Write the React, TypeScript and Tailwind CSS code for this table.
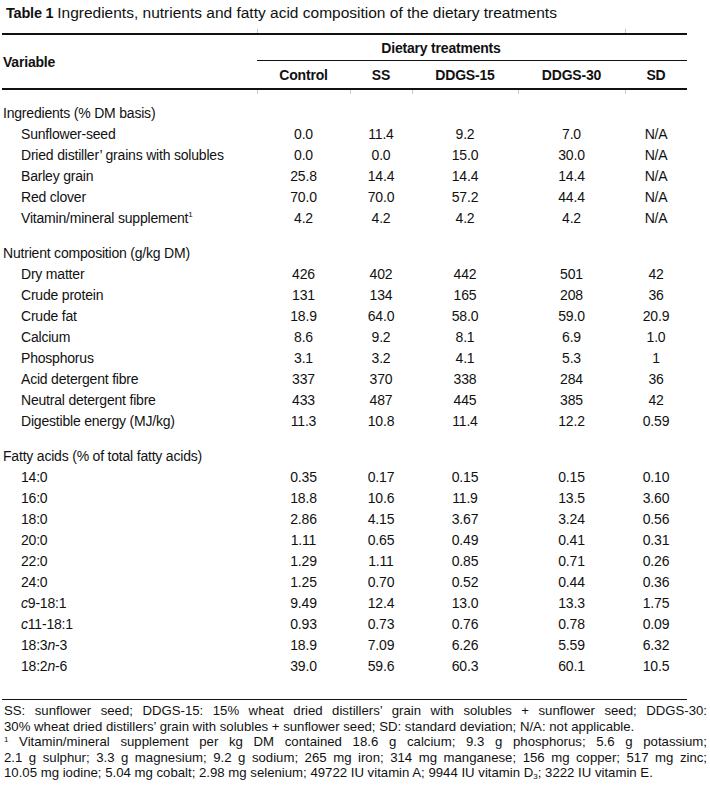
import type { ReactNode } from "react";

type Row = [ReactNode, string, string, string, string, string];

interface Section {
  title: string;
  rows: Row[];
}

// column widths taken from the rule ticks in the reference
const GRID = "grid grid-cols-[255px_93px_62px_106px_107px_62px]";

const sections: Section[] = [
  {
    title: "Ingredients (% DM basis)",
    rows: [
      ["Sunflower-seed", "0.0", "11.4", "9.2", "7.0", "N/A"],
      ["Dried distiller’ grains with solubles", "0.0", "0.0", "15.0", "30.0", "N/A"],
      ["Barley grain", "25.8", "14.4", "14.4", "14.4", "N/A"],
      ["Red clover", "70.0", "70.0", "57.2", "44.4", "N/A"],
      [
        <>
          Vitamin/mineral supplement<sup className="text-[8px] relative -top-[6px]">1</sup>
        </>,
        "4.2",
        "4.2",
        "4.2",
        "4.2",
        "N/A",
      ],
    ],
  },
  {
    title: "Nutrient composition (g/kg DM)",
    rows: [
      ["Dry matter", "426", "402", "442", "501", "42"],
      ["Crude protein", "131", "134", "165", "208", "36"],
      ["Crude fat", "18.9", "64.0", "58.0", "59.0", "20.9"],
      ["Calcium", "8.6", "9.2", "8.1", "6.9", "1.0"],
      ["Phosphorus", "3.1", "3.2", "4.1", "5.3", "1"],
      ["Acid detergent fibre", "337", "370", "338", "284", "36"],
      ["Neutral detergent fibre", "433", "487", "445", "385", "42"],
      ["Digestible energy (MJ/kg)", "11.3", "10.8", "11.4", "12.2", "0.59"],
    ],
  },
  {
    title: "Fatty acids (% of total fatty acids)",
    rows: [
      ["14:0", "0.35", "0.17", "0.15", "0.15", "0.10"],
      ["16:0", "18.8", "10.6", "11.9", "13.5", "3.60"],
      ["18:0", "2.86", "4.15", "3.67", "3.24", "0.56"],
      ["20:0", "1.11", "0.65", "0.49", "0.41", "0.31"],
      ["22:0", "1.29", "1.11", "0.85", "0.71", "0.26"],
      ["24:0", "1.25", "0.70", "0.52", "0.44", "0.36"],
      [<><i>c</i>9-18:1</>, "9.49", "12.4", "13.0", "13.3", "1.75"],
      [<><i>c</i>11-18:1</>, "0.93", "0.73", "0.76", "0.78", "0.09"],
      [<>18:3<i>n</i>-3</>, "18.9", "7.09", "6.26", "5.59", "6.32"],
      [<>18:2<i>n</i>-6</>, "39.0", "59.6", "60.3", "60.1", "10.5"],
    ],
  },
];

function TableRow({ row }: { row: Row }) {
  const [label, ...vals] = row;
  return (
    <div className={`${GRID} h-[21px] items-center`}>
      <div className="pl-[19px] whitespace-nowrap">{label}</div>
      {vals.map((v, i) => (
        <div key={i} className="text-center">
          {v}
        </div>
      ))}
    </div>
  );
}

export default function App() {
  return (
    <div className="w-[710px] min-h-[793px] bg-white text-[#111] font-['Liberation_Sans',Arial,sans-serif] text-[14px] tracking-[-0.2px] leading-[16px]">
      <div className="pl-[6px] pt-[5px] whitespace-nowrap">
        <span className="font-bold text-[14.5px]">Table 1</span>{" "}
        <span className="text-[15.5px] tracking-normal">
          Ingredients, nutrients and fatty acid composition of the dietary treatments
        </span>
      </div>

      <div className="ml-[2px] w-[685px]">
        {/* little cell ticks above the top rule */}
        <div className={`${GRID} h-[4px] mt-[8px]`}>
          <div />
          <div className="border-l border-[#c8c8c8]" />
          <div />
          <div />
          <div />
          <div className="border-l border-[#c8c8c8]" />
        </div>

        <div className={`${GRID} grid-rows-[26px_27px] border-t-2 border-b-2 border-[#111] font-bold`}>
          <div className="row-span-2 flex items-center pl-[1px]">Variable</div>
          <div className="col-span-5 flex items-center justify-center pr-[62px] border-b-[1.5px] border-[#111]">
            Dietary treatments
          </div>
          <div className="flex items-center justify-center">Control</div>
          <div className="flex items-center justify-center">SS</div>
          <div className="flex items-center justify-center">DDGS-15</div>
          <div className="flex items-center justify-center">DDGS-30</div>
          <div className="flex items-center justify-center">SD</div>
        </div>

        <div className={`${GRID} h-[4px]`}>
          <div />
          <div className="border-l border-[#c8c8c8]" />
          <div className="border-l border-[#c8c8c8]" />
          <div className="border-l border-[#c8c8c8]" />
          <div className="border-l border-[#c8c8c8]" />
          <div className="border-l border-[#c8c8c8]" />
        </div>

        <div className="flex flex-col gap-[14px] pt-[8px] pb-[23px] border-b-[1.5px] border-[#111]">
          {sections.map((s) => (
            <div key={s.title}>
              <div className="h-[21px] flex items-center pl-[1px]">{s.title}</div>
              {s.rows.map((r, i) => (
                <TableRow key={i} row={r} />
              ))}
            </div>
          ))}
        </div>
      </div>

      <div className="mt-[3px] ml-[4px] w-[703px] text-[13.2px] leading-[15.6px] tracking-normal">
        <div className="text-justify [text-align-last:justify] whitespace-nowrap">
          SS: sunflower seed; DDGS-15: 15% wheat dried distillers’ grain with solubles + sunflower seed; DDGS-30:
        </div>
        <div className="whitespace-nowrap">
          30% wheat dried distillers’ grain with solubles + sunflower seed; SD: standard deviation; N/A: not applicable.
        </div>
        <div className="text-justify [text-align-last:justify]">
          <sup className="text-[8px]">1</sup> Vitamin/mineral supplement per kg DM contained 18.6 g calcium; 9.3 g phosphorus; 5.6 g potassium;
        </div>
        <div className="text-justify [text-align-last:justify]">
          2.1 g sulphur; 3.3 g magnesium; 9.2 g sodium; 265 mg iron; 314 mg manganese; 156 mg copper; 517 mg zinc;
        </div>
        <div className="whitespace-nowrap">
          10.05 mg iodine; 5.04 mg cobalt; 2.98 mg selenium; 49722 IU vitamin A; 9944 IU vitamin D
          <sub className="text-[8px]">3</sub>; 3222 IU vitamin E.
        </div>
      </div>
    </div>
  );
}
